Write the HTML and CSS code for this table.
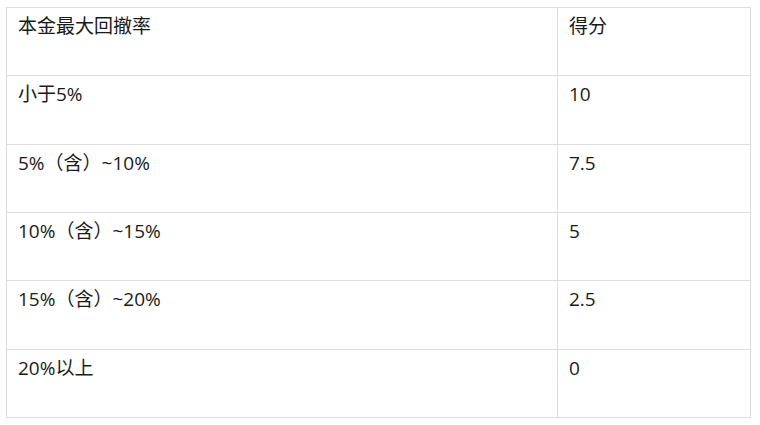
FILE: index.html
```html
<!DOCTYPE html>
<html lang="zh-CN">
<head>
<meta charset="utf-8">
<link rel="stylesheet" href="styles.css">
</head>
<body>
<table class="score-table">
  <tbody>
    <tr><td class="c1">本金最大回撤率</td><td class="c2">得分</td></tr>
    <tr><td class="c1">小于5%</td><td class="c2">10</td></tr>
    <tr><td class="c1">5%（含）~10%</td><td class="c2">7.5</td></tr>
    <tr><td class="c1">10%（含）~15%</td><td class="c2">5</td></tr>
    <tr><td class="c1">15%（含）~20%</td><td class="c2">2.5</td></tr>
    <tr><td class="c1">20%以上</td><td class="c2">0</td></tr>
  </tbody>
</table>
</body>
</html>
```
FILE: styles.css
```css
html, body {
  background: #fff;
}
body {
  margin: 7px 0 0 6px;
  font-family: "Open Sans", "Noto Sans CJK SC", sans-serif;
  font-size: 19px;
  color: #1a1a1a;
}
.score-table {
  border-collapse: collapse;
  width: 745px;
  table-layout: fixed;
}
.score-table tr {
  height: 68.33px;
}
.score-table td {
  border: 1px solid #dddddd;
  padding: 4px 11px;
  vertical-align: top;
  line-height: 28px;
}
.c1 {
  width: 528px;
}
```
